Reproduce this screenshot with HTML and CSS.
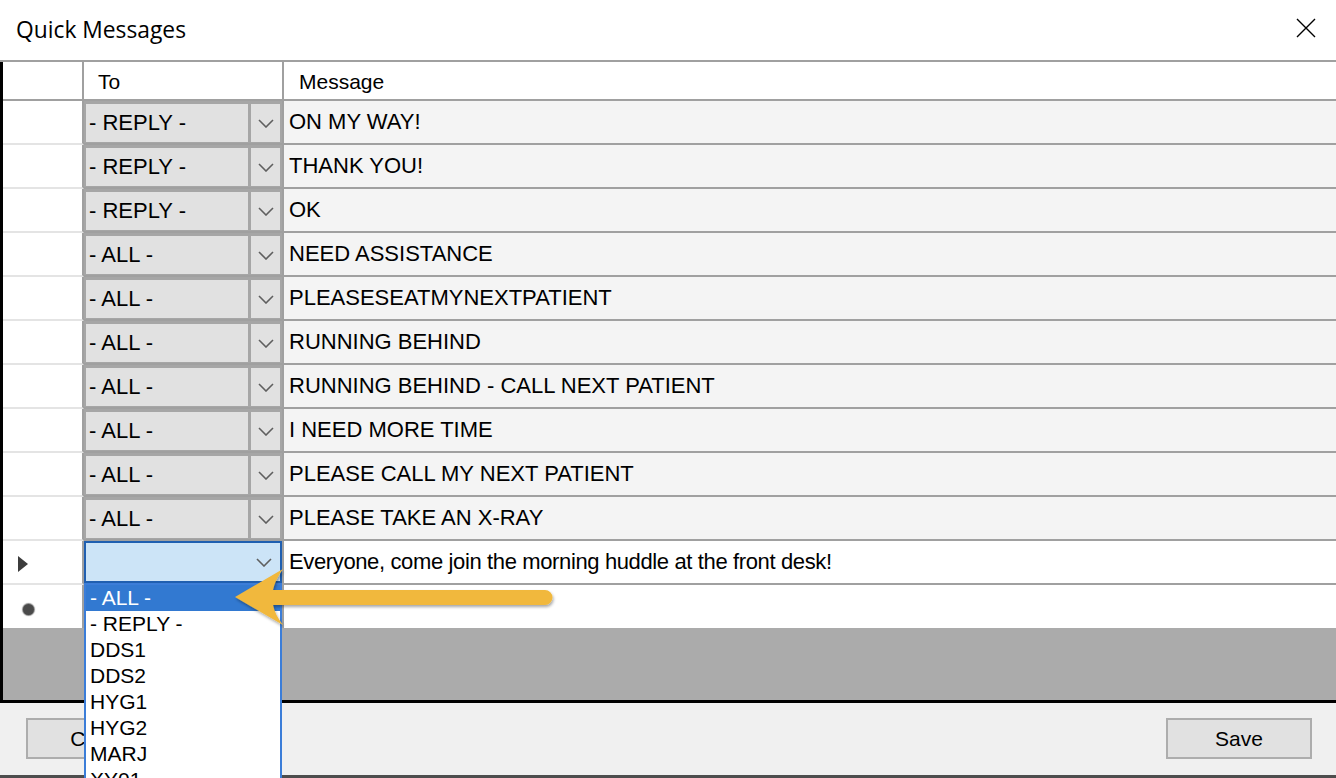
FILE: index.html
```html
<!DOCTYPE html>
<html>
<head>
<meta charset="utf-8">
<title>Quick Messages</title>
<link rel="stylesheet" href="styles.css">
</head>
<body>
<div class="titlebar">
  <span class="title">Quick Messages</span>
  <svg class="close" viewBox="0 0 20 20"><path d="M1 1 L19 19 M19 1 L1 19" stroke="#000" stroke-width="1.4" fill="none"/></svg>
</div>
<div class="grid">
  <div class="row head">
    <div class="rh rh-head"></div>
    <div class="to-head">To</div>
    <div class="msg-head">Message</div>
  </div>
  <div class="row"><div class="rh"></div><div class="to"><div class="ctext">- REPLY -</div><div class="cbtn"><svg class="chev" viewBox="0 0 16 9"><path d="M1 1 L8 8 L15 1"/></svg></div></div><div class="msg">ON MY WAY!</div></div>
  <div class="row"><div class="rh"></div><div class="to"><div class="ctext">- REPLY -</div><div class="cbtn"><svg class="chev" viewBox="0 0 16 9"><path d="M1 1 L8 8 L15 1"/></svg></div></div><div class="msg">THANK YOU!</div></div>
  <div class="row"><div class="rh"></div><div class="to"><div class="ctext">- REPLY -</div><div class="cbtn"><svg class="chev" viewBox="0 0 16 9"><path d="M1 1 L8 8 L15 1"/></svg></div></div><div class="msg">OK</div></div>
  <div class="row"><div class="rh"></div><div class="to"><div class="ctext">- ALL -</div><div class="cbtn"><svg class="chev" viewBox="0 0 16 9"><path d="M1 1 L8 8 L15 1"/></svg></div></div><div class="msg">NEED ASSISTANCE</div></div>
  <div class="row"><div class="rh"></div><div class="to"><div class="ctext">- ALL -</div><div class="cbtn"><svg class="chev" viewBox="0 0 16 9"><path d="M1 1 L8 8 L15 1"/></svg></div></div><div class="msg">PLEASESEATMYNEXTPATIENT</div></div>
  <div class="row"><div class="rh"></div><div class="to"><div class="ctext">- ALL -</div><div class="cbtn"><svg class="chev" viewBox="0 0 16 9"><path d="M1 1 L8 8 L15 1"/></svg></div></div><div class="msg">RUNNING BEHIND</div></div>
  <div class="row"><div class="rh"></div><div class="to"><div class="ctext">- ALL -</div><div class="cbtn"><svg class="chev" viewBox="0 0 16 9"><path d="M1 1 L8 8 L15 1"/></svg></div></div><div class="msg">RUNNING BEHIND - CALL NEXT PATIENT</div></div>
  <div class="row"><div class="rh"></div><div class="to"><div class="ctext">- ALL -</div><div class="cbtn"><svg class="chev" viewBox="0 0 16 9"><path d="M1 1 L8 8 L15 1"/></svg></div></div><div class="msg">I NEED MORE TIME</div></div>
  <div class="row"><div class="rh"></div><div class="to"><div class="ctext">- ALL -</div><div class="cbtn"><svg class="chev" viewBox="0 0 16 9"><path d="M1 1 L8 8 L15 1"/></svg></div></div><div class="msg">PLEASE CALL MY NEXT PATIENT</div></div>
  <div class="row"><div class="rh"></div><div class="to"><div class="ctext">- ALL -</div><div class="cbtn"><svg class="chev" viewBox="0 0 16 9"><path d="M1 1 L8 8 L15 1"/></svg></div></div><div class="msg">PLEASE TAKE AN X-RAY</div></div>
  <div class="row sel">
    <div class="rh rh-sel"><span class="tri"></span></div>
    <div class="to to-sel"><div class="selbox"><svg class="chev" viewBox="0 0 16 9"><path d="M1 1 L8 8 L15 1"/></svg></div></div>
    <div class="msg msg-white msg-mixed">Everyone, come join the morning huddle at the front desk!</div>
  </div>
  <div class="row newrow">
    <div class="rh rh-new"><span class="dot"></span></div>
    <div class="to to-new"></div>
    <div class="msg msg-new"></div>
  </div>
</div>
<div class="footer">
  <button class="btn btn-cancel">Cancel</button>
  <button class="btn">Save</button>
</div>
<div class="dropdown">
  <div class="item hl">- ALL -</div>
  <div class="item">- REPLY -</div>
  <div class="item">DDS1</div>
  <div class="item">DDS2</div>
  <div class="item">HYG1</div>
  <div class="item">HYG2</div>
  <div class="item">MARJ</div>
  <div class="item">XY01</div>
</div>
<svg class="arrow" viewBox="0 0 340 80" width="340" height="80">
  <defs>
    <filter id="sh" x="-10%" y="-30%" width="120%" height="160%">
      <feDropShadow dx="1" dy="2" stdDeviation="1.5" flood-color="#000" flood-opacity="0.35"/>
    </filter>
  </defs>
  <path d="M10 37 L58 9 Q50 20 48 30 L320 30 A7.5 7.5 0 0 1 320 45 L48 45 Q50 55 58 65 Z" fill="#f1b83c" filter="url(#sh)"/>
</svg>
</body>
</html>
```
FILE: styles.css
```css
* { box-sizing: border-box; }
html, body { margin: 0; padding: 0; }
body {
  width: 1336px;
  height: 778px;
  overflow: hidden;
  position: relative;
  background: #fff;
  font-family: "Liberation Sans", Arial, sans-serif;
  font-size: 21px;
  color: #000;
}
.titlebar {
  height: 62px;
  border-bottom: 2px solid #a0a0a0;
  display: flex;
  align-items: center;
  justify-content: space-between;
  padding: 0 20px 0 16px;
}
.title { font-family: "Open Sans", sans-serif; font-size: 22.8px; margin-bottom: 2px; }
.close { width: 20px; height: 20px; margin-bottom: 4px; }

.grid {
  height: 641px;
  border-left: 3px solid #000;
  border-bottom: 3px solid #000;
  background: #ababab;
  display: flex;
  flex-direction: column;
}
.row { display: flex; height: 44px; flex: none; }
.head { height: 39px; }
.rh {
  width: 81px;
  flex: none;
  background: #fff;
  border-right: 2px solid #a0a0a0;
  border-bottom: 2px solid #e4e4e4;
  display: flex;
  align-items: center;
}
.rh-head { border-bottom-color: #a0a0a0; }
.to-head {
  width: 200px;
  flex: none;
  background: #fff;
  border-right: 2px solid #a0a0a0;
  border-bottom: 2px solid #a0a0a0;
  padding-left: 14px;
  padding-top: 2px;
  display: flex;
  align-items: center;
}
.msg-head {
  flex: 1;
  border-bottom: 2px solid #a0a0a0;
  padding-left: 15px;
  padding-top: 2px;
  display: flex;
  align-items: center;
  background: #fff;
}
.to {
  width: 200px;
  flex: none;
  background: #a6a6a6;
  border-right: 2px solid #a0a0a0;
  border-bottom: 2px solid #a0a0a0;
  padding: 3px 2px 1px 2px;
  display: flex;
  gap: 3px;
}
.ctext {
  width: 162px;
  background: #e1e1e1;
  display: flex;
  align-items: center;
  padding-left: 3px;
  font-size: 22px;
  white-space: nowrap;
}
.cbtn {
  flex: 1;
  background: #e1e1e1;
  display: flex;
  align-items: center;
  justify-content: center;
}
.chev { width: 16px; height: 9px; }
.chev path { stroke: #5f5f5f; stroke-width: 1.6; fill: none; }
.msg {
  flex: 1;
  background: #f4f4f4;
  border-bottom: 2px solid #a0a0a0;
  display: flex;
  align-items: center;
  padding-left: 5px;
  white-space: nowrap;
  font-size: 22px;
}
.msg-white { background: #fff; }
.msg-mixed { letter-spacing: -0.37px; }
.to-sel { padding: 0; background: #fff; }
.selbox {
  flex: 1;
  background: #cce4f7;
  border: 2px solid #1f5fb0;
  display: flex;
  align-items: center;
  justify-content: flex-end;
  padding-right: 8px;
}
.rh-sel { padding-left: 15px; }
.tri {
  width: 0;
  height: 0;
  margin-top: 4px;
  border-left: 10px solid #3c3c3c;
  border-top: 8px solid transparent;
  border-bottom: 8px solid transparent;
}
.newrow { height: 43px; }
.rh-new { padding-left: 20px; border-bottom: none; }
.dot {
  width: 11px;
  height: 11px;
  margin-top: 5px;
  border-radius: 50%;
  background: #4a4a4a;
  box-shadow: 0 0 1px 1px #8a8a8a;
}
.to-new { background: #fff; border-bottom: none; }
.msg-new { background: #fff; border-bottom: none; }

.footer {
  height: 75px;
  background: #f0f0f0;
  border-bottom: 3px solid #4d4d4d;
  padding: 15px 24px 0 26px;
  display: flex;
  justify-content: space-between;
  align-items: flex-start;
}
.btn {
  width: 146px;
  height: 41px;
  border: 2px solid #adadad;
  background: #e1e1e1;
  font-family: "Liberation Sans", Arial, sans-serif;
  font-size: 21px;
  color: #000;
  padding: 0;
}
.btn-cancel { padding-left: 8px; }
.dropdown {
  position: absolute;
  left: 84px;
  top: 583px;
  width: 198px;
  height: 210px;
  background: #fff;
  border: 2px solid #3b7dd8;
  border-bottom: none;
}
.item {
  height: 26px;
  line-height: 26px;
  padding-left: 4px;
  white-space: nowrap;
}
.item.hl { background: #3279d1; color: #fff; }
.arrow {
  position: absolute;
  left: 225px;
  top: 560px;
  overflow: visible;
}
```
